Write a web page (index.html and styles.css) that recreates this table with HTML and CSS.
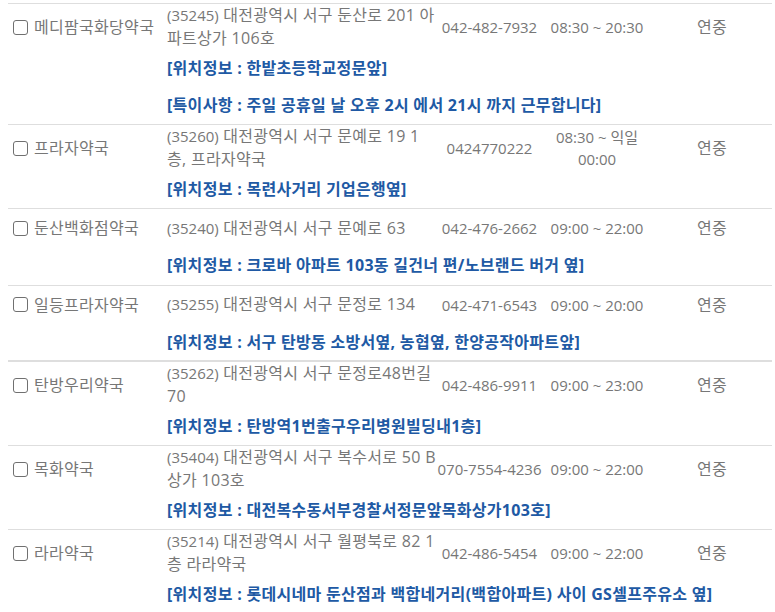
FILE: index.html
```html
<!DOCTYPE html>
<html lang="ko">
<head>
<meta charset="utf-8">
<title>약국 목록</title>
<link rel="stylesheet" href="styles.css">
</head>
<body>
<div class="list">
  <div class="item">
    <label class="name"><input type="checkbox" class="check"><span>메디팜국화당약국</span></label>
    <div class="addr"><span class="zip">(35245)</span> 대전광역시 서구 둔산로 201 아파트상가 106호</div>
    <div class="tel">042-482-7932</div>
    <div class="hours">08:30 ~ 20:30</div>
    <div class="closed">연중</div>
    <div class="note">[위치정보 : 한밭초등학교정문앞]</div>
    <div class="note">[특이사항 : 주일 공휴일 날 오후 2시 에서 21시 까지 근무합니다]</div>
  </div>
  <div class="item">
    <label class="name"><input type="checkbox" class="check"><span>프라자약국</span></label>
    <div class="addr"><span class="zip">(35260)</span> 대전광역시 서구 문예로 19 1층, 프라자약국</div>
    <div class="tel">0424770222</div>
    <div class="hours">08:30 ~ 익일 00:00</div>
    <div class="closed">연중</div>
    <div class="note">[위치정보 : 목련사거리 기업은행옆]</div>
  </div>
  <div class="item">
    <label class="name"><input type="checkbox" class="check"><span>둔산백화점약국</span></label>
    <div class="addr"><span class="zip">(35240)</span> 대전광역시 서구 문예로 63</div>
    <div class="tel">042-476-2662</div>
    <div class="hours">09:00 ~ 22:00</div>
    <div class="closed">연중</div>
    <div class="note">[위치정보 : 크로바 아파트 103동 길건너 편/노브랜드 버거 옆]</div>
  </div>
  <div class="item">
    <label class="name"><input type="checkbox" class="check"><span>일등프라자약국</span></label>
    <div class="addr"><span class="zip">(35255)</span> 대전광역시 서구 문정로 134</div>
    <div class="tel">042-471-6543</div>
    <div class="hours">09:00 ~ 20:00</div>
    <div class="closed">연중</div>
    <div class="note">[위치정보 : 서구 탄방동 소방서옆, 농협옆, 한양공작아파트앞]</div>
  </div>
  <div class="item item-break">
    <label class="name"><input type="checkbox" class="check"><span>탄방우리약국</span></label>
    <div class="addr"><span class="zip">(35262)</span> 대전광역시 서구 문정로48번길 70</div>
    <div class="tel">042-486-9911</div>
    <div class="hours">09:00 ~ 23:00</div>
    <div class="closed">연중</div>
    <div class="note">[위치정보 : 탄방역1번출구우리병원빌딩내1층]</div>
  </div>
  <div class="item">
    <label class="name"><input type="checkbox" class="check"><span>목화약국</span></label>
    <div class="addr"><span class="zip">(35404)</span> 대전광역시 서구 복수서로 50 B상가 103호</div>
    <div class="tel">070-7554-4236</div>
    <div class="hours">09:00 ~ 22:00</div>
    <div class="closed">연중</div>
    <div class="note">[위치정보 : 대전복수동서부경찰서정문앞목화상가103호]</div>
  </div>
  <div class="item">
    <label class="name"><input type="checkbox" class="check"><span>라라약국</span></label>
    <div class="addr"><span class="zip">(35214)</span> 대전광역시 서구 월평북로 82 1층 라라약국</div>
    <div class="tel">042-486-5454</div>
    <div class="hours">09:00 ~ 22:00</div>
    <div class="closed">연중</div>
    <div class="note">[위치정보 : 롯데시네마 둔산점과 백합네거리(백합아파트) 사이 GS셀프주유소 옆]</div>
  </div>
</div>
</body>
</html>
```
FILE: styles.css
```css
html, body {
  margin: 0;
  background: #fff;
}

body {
  padding: 3px 3px 0 8px;
  font-family: "Open Sans", "Noto Sans CJK KR", sans-serif;
  font-size: 16px;
  letter-spacing: 0.3px;
  line-height: 22.5px;
  color: #777;
}

.list {
  width: 764px;
}

.item {
  display: grid;
  grid-template-columns: 152px 277px 105px 110px 120px;
  grid-template-rows: minmax(38.5px, auto);
  grid-auto-rows: auto;
  border-top: 1px solid #dedede;
}

.item-break {
  margin-top: -1px;
  border-top-width: 2px;
}

.name,
.addr,
.tel,
.hours,
.closed {
  grid-row: 1;
  align-self: center;
}

.name {
  grid-column: 1;
  display: flex;
  align-items: center;
  gap: 6px;
  padding-left: 5px;
}

.check {
  appearance: none;
  -webkit-appearance: none;
  flex: none;
  width: 15px;
  height: 15px;
  margin: 0;
  border: 1.5px solid #707070;
  border-radius: 3px;
  background: #fff;
}

.addr {
  grid-column: 2;
  padding: 0 0.2px 1px 7px;
}

.zip {
  font-size: 15px;
  letter-spacing: 0;
}

.tel,
.hours {
  font-size: 15px;
  letter-spacing: 0;
  text-align: center;
}

.tel {
  grid-column: 3;
}

.hours {
  grid-column: 4;
  padding: 0 4px;
}

.closed {
  grid-column: 5;
  text-align: center;
}

.note {
  grid-column: 2 / 6;
  padding: 6.5px 0 8px 7px;
  font-weight: 700;
  letter-spacing: 0.3px;
  color: #2059a4;
}
```
